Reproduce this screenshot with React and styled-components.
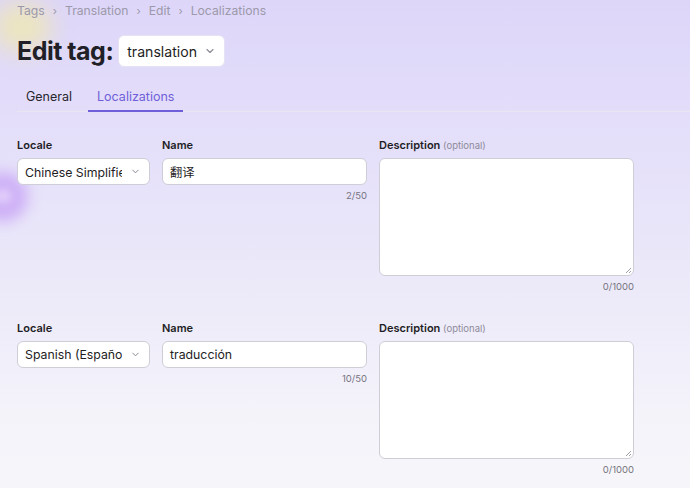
import React from "react";
import styled, { createGlobalStyle } from "styled-components";

const GlobalStyle = createGlobalStyle`
   html, body {
      margin: 0;
      padding: 0;
   }
   body {
      font-family: Inter, "Noto Sans", "Noto Sans CJK SC", sans-serif;
      color: #1e1d24;
   }
`;

const Page = styled.div`
   position: relative;
   width: 690px;
   height: 488px;
   overflow: hidden;
   background: linear-gradient(180deg, #ddd6f9 0%, #e3ddfa 22%, #ebe8f9 55%, #f4f3fa 85%, #f6f6fa 100%);
`;

const Blob = styled.div`
   position: absolute;
   border-radius: 50%;
   filter: blur(${p => p.$blur}px);
   pointer-events: none;
`;

const Content = styled.div`
   position: relative;
   padding: 0 0 0 17px;
   display: flex;
   flex-direction: column;
`;

const Breadcrumb = styled.nav`
   display: flex;
   align-items: center;
   gap: 7px;
   height: 21px;
   font-size: 12.2px;
   color: #9c99aa;
`;

const Sep = styled.span`
   font-size: 11px;
   color: #9c99aa;
   margin: 0 1px;
`;

const TitleRow = styled.div`
   display: flex;
   align-items: center;
   gap: 5px;
   margin-top: 14px;
`;

const Title = styled.h1`
   margin: 0;
   font-size: 25px;
   font-weight: 700;
   letter-spacing: -0.5px;
   color: #202026;
`;

const TagSelect = styled.button`
   display: flex;
   align-items: center;
   gap: 8px;
   height: 32px;
   padding: 0 9px 0 8px;
   border: 1px solid #e6e2f3;
   border-radius: 6px;
   background: #fff;
   font-family: inherit;
   font-size: 14.1px;
   color: #1e1d24;
`;

const Tabs = styled.div`
   display: flex;
   margin-top: 16px;
   border-bottom: 1px solid #e8e6ee;
`;

const Tab = styled.div`
   padding: 0 9px;
   height: 27px;
   display: flex;
   align-items: center;
   font-size: 12.5px;
   color: ${p => (p.$active ? "#6f5fd8" : "#27262d")};
   border-bottom: 2px solid ${p => (p.$active ? "#6f5fd8" : "transparent")};
   margin-bottom: -1px;
   margin-right: 7px;
`;

const Row = styled.div`
   display: grid;
   grid-template-columns: 133px 205px 255px;
   column-gap: 12px;
   margin-top: ${p => p.$top}px;
`;

const Field = styled.div`
   display: flex;
   flex-direction: column;
`;

const Label = styled.label`
   font-size: 11px;
   font-weight: 600;
   color: #1e1d24;
   height: 14px;
   margin-bottom: 6px;
`;

const Optional = styled.span`
   font-weight: 400;
   font-size: 9.5px;
   color: #8d8a99;
`;

const Control = styled.div`
   box-sizing: border-box;
   display: flex;
   align-items: center;
   gap: 9px;
   height: ${p => p.$h}px;
   border: 1px solid #cfcdd6;
   border-radius: 6px;
   background: #fff;
   padding: 0 9px 0 7px;
   font-size: 12.3px;
   color: #1e1d24;
   position: relative;
`;

const SelectText = styled.span`
   flex: 1;
   overflow: hidden;
   white-space: nowrap;
`;

const Counter = styled.div`
   align-self: flex-end;
   font-size: 9.5px;
   color: #76747f;
   margin-top: 5px;
`;

const Grip = styled.svg`
   position: absolute;
   right: 1px;
   bottom: 1px;
`;

function Chevron({ size = 10 }) {
   return (
      <svg width={size} height={size} viewBox="0 0 10 10" fill="none">
         <path d="M2 3.5 L5 6.5 L8 3.5" stroke="#8a8794" strokeWidth="1.1" strokeLinecap="round" strokeLinejoin="round" />
      </svg>
   );
}

function LocaleRow({ locale, name, count, top }) {
   return (
      <Row $top={top}>
         <Field>
            <Label>Locale</Label>
            <Control $h={27}>
               <SelectText>{locale}</SelectText>
               <Chevron size={9} />
            </Control>
         </Field>
         <Field>
            <Label>Name</Label>
            <Control $h={27}>{name}</Control>
            <Counter>{count}/50</Counter>
         </Field>
         <Field>
            <Label>
               Description <Optional>(optional)</Optional>
            </Label>
            <Control $h={118}>
               <Grip width="7" height="7" viewBox="0 0 7 7">
                  <path d="M6 1 L1 6 M6 4 L4 6" stroke="#8a8794" strokeWidth="0.8" />
               </Grip>
            </Control>
            <Counter>0/1000</Counter>
         </Field>
      </Row>
   );
}

export default function App() {
   return (
      <Page>
         <GlobalStyle />
         <Blob $blur={12} style={{ left: -8, top: 2, width: 60, height: 50, background: "rgba(240, 232, 175, 0.8)" }} />
         <Blob $blur={7} style={{ left: -22, top: 172, width: 50, height: 50, background: "rgba(195, 155, 245, 0.7)" }} />
         <Blob $blur={4} style={{ left: -6, top: 189, width: 18, height: 14, background: "rgba(235, 220, 252, 0.7)" }} />
         <Content>
            <Breadcrumb>
               <span>Tags</span>
               <Sep>›</Sep>
               <span>Translation</span>
               <Sep>›</Sep>
               <span>Edit</span>
               <Sep>›</Sep>
               <span>Localizations</span>
            </Breadcrumb>
            <TitleRow>
               <Title>Edit tag:</Title>
               <TagSelect>
                  translation
                  <Chevron />
               </TagSelect>
            </TitleRow>
            <Tabs>
               <Tab>General</Tab>
               <Tab $active>Localizations</Tab>
            </Tabs>
            <LocaleRow top={26} locale="Chinese Simplified (简体中文)" name="翻译" count={2} />
            <LocaleRow top={29} locale="Spanish (Español)" name="traducción" count={10} />
         </Content>
      </Page>
   );
}
